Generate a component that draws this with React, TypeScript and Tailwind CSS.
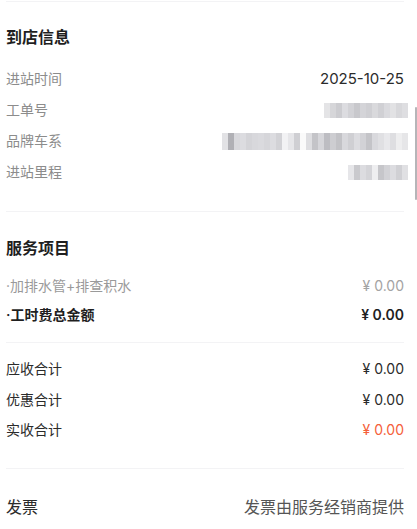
import React from 'react';

const font = { fontFamily: '"Inter", "Noto Sans CJK SC", sans-serif' };

// pixelated (mosaic) placeholder for masked values
const Mosaic = ({ cells, h = 'h-[15px]' }: { cells: string[]; h?: string }) => (
  <div className={`flex ${h} blur-[0.6px] -mr-1`}>
    {cells.map((c, i) => (
      <div key={i} className="w-[6px] h-full" style={{ backgroundColor: c }} />
    ))}
  </div>
);

const Row = ({ label, children, bold = false, muted = false }: { label: string; children: React.ReactNode; bold?: boolean; muted?: boolean }) => (
  <div className="flex items-center justify-between h-[22px] text-[14px] leading-[22px]">
    <span className={bold ? 'font-semibold text-[#1f1f1f]' : muted ? 'text-[#9a9a9a]' : 'text-[#8c8c8c]'}>{label}</span>
    {children}
  </div>
);

const Sep = () => <div className="h-px bg-[#f3f3f5]" />;

export default function App() {
  const order = ['#e4e4e6', '#d6d6d9', '#ccccd0', '#dcdce0', '#d2d2d6', '#c8c8cc', '#d4d4d8', '#cfcfd3', '#d9d9dc', '#d0d0d4', '#dadade', '#e2e2e4', '#d8d8db', '#dedee1'];
  const brand = ['#e2e2e5', '#b0b0b5', '#d8d8dc', '#dcdce0', '#d4d4d8', '#d8d8dc', '#dadade', '#d6d6da', '#dcdce0', '#d2d2d6', '#f2f2f4', '#e6e6e9', '#cfcfd3', '#fafafa', '#dedee1', '#c4c4c8', '#d6d6da', '#bdbdc2', '#cdcdd1', '#c2c2c6', '#d8d8dc', '#cfcfd3', '#dcdce0', '#d2d2d6', '#c4c4c8', '#d9d9dd', '#e0e0e3', '#e8e8eb', '#dedee1', '#eeeeef', '#e6e6e8'];
  const km = ['#e6e6e9', '#c9c9cd', '#dcdce0', '#d4d4d8', '#eeeef0', '#c6c6ca', '#d2d2d6', '#dcdce0', '#d0d0d4', '#e0e0e3'];

  return (
    <div className="relative w-[417px] h-[529px] overflow-hidden bg-white" style={font}>
      <div className="pl-[6px] pr-[13px]">
        <div className="pt-px"><Sep /></div>

        <div className="pt-[23px] pb-[28px]">
          <div className="text-[16px] leading-[24px] font-bold text-[#1f1f1f]">到店信息</div>
          <div className="mt-[19px] flex flex-col gap-[9px]">
            <Row label="进站时间"><span className="text-[15px] text-[#2b2b2b]">2025-10-25</span></Row>
            <Row label="工单号"><Mosaic cells={order} /></Row>
            <Row label="品牌车系"><Mosaic cells={brand} h="h-[17px]" /></Row>
            <Row label="进站里程"><Mosaic cells={km} /></Row>
          </div>
        </div>

        <Sep />

        <div className="pt-[24px] pb-[16px]">
          <div className="text-[16px] leading-[24px] font-bold text-[#1f1f1f]">服务项目</div>
          <div className="mt-[15px] flex flex-col gap-[7px]">
            <Row label="·加排水管+排查积水" muted><span className="text-[#a3a3a3]">¥ 0.00</span></Row>
            <Row label="·工时费总金额" bold><span className="font-semibold text-[#1f1f1f]">¥ 0.00</span></Row>
          </div>
        </div>

        <Sep />

        <div className="pt-[15px] pb-[27px] flex flex-col gap-[8.5px]">
          {[
            ['应收合计', 'text-[#2b2b2b]'],
            ['优惠合计', 'text-[#2b2b2b]'],
            ['实收合计', 'text-[#f5603a]'],
          ].map(([l, c]) => (
            <div key={l} className="flex items-center justify-between h-[22px] text-[14px] leading-[22px]">
              <span className="text-[#2b2b2b]">{l}</span>
              <span className={c}>¥ 0.00</span>
            </div>
          ))}
        </div>

        <Sep />

        <div className="pt-[27px] flex items-center justify-between h-[22px] box-content text-[16px] leading-[22px]">
          <span className="text-[#2b2b2b]">发票</span>
          <span className="text-[#555555]">发票由服务经销商提供</span>
        </div>
      </div>

      {/* scroll indicator */}
      <div className="absolute right-0 top-[107px] w-[2px] h-[93px] rounded-full bg-[#b5b5b8]" />
    </div>
  );
}
